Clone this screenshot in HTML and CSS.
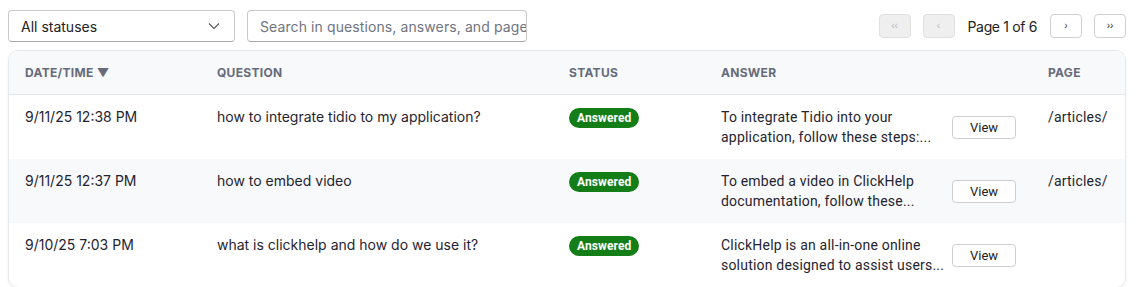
FILE: index.html
```html
<!DOCTYPE html>
<html>
<head>
<meta charset="utf-8">
<link rel="stylesheet" href="styles.css">
</head>
<body>
<div class="toolbar">
  <div class="filters">
    <div class="select">
      <span>All statuses</span>
      <svg class="chev" width="12" height="8" viewBox="0 0 12 8"><path d="M1 1.5 L6 6.5 L11 1.5" fill="none" stroke="#555" stroke-width="1.1"/></svg>
    </div>
    <div class="search"><span>Search in questions, answers, and pages</span></div>
  </div>
  <div class="pager">
    <button class="pbtn disabled">‹‹</button>
    <button class="pbtn disabled">‹</button>
    <span class="pinfo">Page 1 of 6</span>
    <button class="pbtn">›</button>
    <button class="pbtn">››</button>
  </div>
</div>
<div class="card">
  <div class="row head">
    <div class="cell">Date/Time ▼</div>
    <div class="cell">Question</div>
    <div class="cell">Status</div>
    <div class="cell">Answer</div>
    <div class="cell">Page</div>
  </div>
  <div class="row">
    <div class="cell">9/11/25 12:38 PM</div>
    <div class="cell">how to integrate tidio to my application?</div>
    <div class="cell"><span class="badge">Answered</span></div>
    <div class="cell answer"><div class="atext">To integrate Tidio into your application, follow these steps:...</div><button class="view">View</button></div>
    <div class="cell pg">/articles/</div>
  </div>
  <div class="row alt">
    <div class="cell">9/11/25 12:37 PM</div>
    <div class="cell">how to embed video</div>
    <div class="cell"><span class="badge">Answered</span></div>
    <div class="cell answer"><div class="atext">To embed a video in ClickHelp documentation, follow these...</div><button class="view">View</button></div>
    <div class="cell pg">/articles/</div>
  </div>
  <div class="row">
    <div class="cell">9/10/25 7:03 PM</div>
    <div class="cell">what is clickhelp and how do we use it?</div>
    <div class="cell"><span class="badge">Answered</span></div>
    <div class="cell answer"><div class="atext">ClickHelp is an all-in-one online solution designed to assist users...</div><button class="view">View</button></div>
    <div class="cell pg"></div>
  </div>
</div>
</body>
</html>
```

FILE: styles.css
```css
* { box-sizing: border-box; }
body {
  margin: 0;
  padding: 10px 10px 0 8px;
  font-family: Inter, "Liberation Sans", sans-serif;
  font-size: 14px;
  color: #1f2430;
  background: #fff;
  overflow: hidden;
}
.toolbar {
  display: flex;
  justify-content: space-between;
  align-items: flex-start;
  height: 40px;
}
.filters { display: flex; gap: 12px; }
.select, .search {
  height: 32px;
  border: 1px solid #c9c9c9;
  border-bottom-color: #a9a9a9;
  border-radius: 4px;
  display: flex;
  align-items: center;
  background: #fff;
}
.select {
  width: 227px;
  padding: 0 14px 0 12px;
  justify-content: space-between;
  color: #222;
}
.search {
  width: 280px;
  padding: 0 0 0 12px;
  color: #707480;
  overflow: hidden;
  white-space: nowrap;
}
.search span { letter-spacing: 0.1px; }
.pager {
  display: flex;
  align-items: center;
  gap: 12px;
  margin-top: 4px;
}
.pbtn {
  width: 32px;
  height: 24px;
  border: 1px solid #cfcfcf;
  border-radius: 4px;
  background: #fff;
  font-family: "Liberation Sans", sans-serif;
  font-size: 10px;
  color: #333;
  padding: 0;
  line-height: 1;
}
.pbtn.disabled {
  background: #efefef;
  border-color: #e0e0e0;
  color: #b5b5b5;
}
.pinfo { color: #222; margin: 0 1px; letter-spacing: -0.35px; }
.card {
  border: 1px solid #e6e8ec;
  border-radius: 10px;
  width: 1118px;
  overflow: hidden;
  box-shadow: 0 1px 3px rgba(0,0,0,0.05);
}
.row {
  display: grid;
  grid-template-columns: 192px 352px 152px 327px 92px;
  height: 64px;
  padding-top: 12px;
  line-height: 20px;
}
.row.alt { background: #f8f9fb; }
.row.head {
  height: 44px;
  padding-top: 0;
  align-items: center;
  background: #f8f9fb;
  border-bottom: 1px solid #e4e6ea;
  font-size: 12px;
  font-weight: 700;
  text-transform: uppercase;
  letter-spacing: 0.3px;
  color: #656b7a;
}
.cell { padding: 0 16px; }
.badge {
  display: inline-block;
  height: 20px;
  line-height: 20px;
  padding: 0 8px;
  border-radius: 10px;
  background: #137d17;
  color: #fff;
  font-family: Roboto, sans-serif;
  font-weight: 700;
  font-size: 12px;
  letter-spacing: 0.1px;
}
.answer {
  display: flex;
  align-items: center;
  gap: 7px;
  align-self: start;
  font-family: Roboto, sans-serif;
}
.atext {
  width: 224px;
  letter-spacing: 0.2px;
}
.view {
  width: 64px;
  height: 23px;
  border: 1px solid #cfcfcf;
  border-radius: 4px;
  background: #fff;
  font-family: Roboto, sans-serif;
  font-size: 13px;
  color: #222;
  padding: 0;
}
.pg { font-family: Roboto, sans-serif; letter-spacing: 0.2px; }
```
